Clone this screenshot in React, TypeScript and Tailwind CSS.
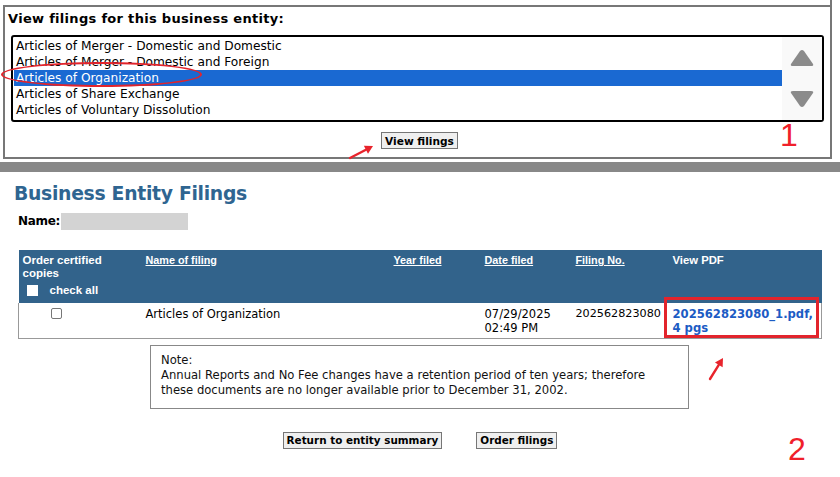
import React from "react";

const body = { fontFamily: '"DejaVu Sans", Verdana, sans-serif' };
const head = { fontFamily: '"Liberation Sans", Arial, sans-serif' };

const filings = [
  "Articles of Merger - Domestic and Domestic",
  "Articles of Merger - Domestic and Foreign",
  "Articles of Organization",
  "Articles of Share Exchange",
  "Articles of Voluntary Dissolution",
];

const RedArrow = ({ className, x1, y1, x2, y2 }: { className: string; x1: number; y1: number; x2: number; y2: number }) => {
  // arrow drawn from tail (x1,y1) to head (x2,y2) with a filled head
  const ang = Math.atan2(y2 - y1, x2 - x1);
  const len = 8;
  const w = 4.5;
  const bx = x2 - Math.cos(ang) * len;
  const by = y2 - Math.sin(ang) * len;
  const px = -Math.sin(ang) * w;
  const py = Math.cos(ang) * w;
  return (
    <svg className={className} viewBox="0 0 30 30" fill="none">
      <path d={`M${x1} ${y1} L${bx} ${by}`} stroke="#e8242c" strokeWidth="2.4" strokeLinecap="round" />
      <path d={`M${x2} ${y2} L${bx + px} ${by + py} L${bx - px} ${by - py} Z`} fill="#e8242c" />
    </svg>
  );
};

export default function App() {
  return (
    <div className="w-[840px] h-[477px] bg-white overflow-hidden text-black" style={body}>
      {/* top panel */}
      <div className="mr-[8px] border-r-2 border-[#777] pt-[5px]">
        <div className="relative ml-[3px] border-t-2 border-l-2 border-b-2 border-[#777] h-[154px] pt-[4px]">
          <div className="pl-[3px] text-[13px] font-bold leading-[16px] tracking-[0.3px]">
            View filings for this business entity:
          </div>
          <div className="mt-[8px] ml-[6px] mr-[6px] h-[87px] border-2 border-black rounded-[3px] flex">
            <div className="flex-1 pt-[1px] pl-[1px]">
              {filings.map((f, i) => (
                <div
                  key={f}
                  className={
                    "h-[16px] leading-[16px] pl-[2px] text-[12.2px] " +
                    (i === 2 ? "bg-[#1a69d2] text-white" : "")
                  }
                >
                  {f}
                </div>
              ))}
            </div>
            <div className="w-[40px] bg-[#f9f9f9] flex flex-col items-center justify-between py-[12px]">
              <svg width="24" height="18" viewBox="0 0 24 18">
                <path d="M10 2 Q12 0 14 2 L23 15 Q24 17 21 17 L3 17 Q0 17 1 15 Z" fill="#8b8b8b" />
              </svg>
              <svg width="24" height="18" viewBox="0 0 24 18">
                <path d="M10 16 Q12 18 14 16 L23 3 Q24 1 21 1 L3 1 Q0 1 1 3 Z" fill="#8b8b8b" />
              </svg>
            </div>
          </div>
          <div className="flex justify-center mt-[10px] pl-[4px]">
            <button className="border border-[#767676] bg-[#efefef] px-[3px] h-[17px] leading-[14px] text-[10.6px] font-bold">
              View filings
            </button>
          </div>
          {/* annotations */}
          <div className="absolute left-[-4px] top-[55px] w-[201px] h-[25px] border-[2.5px] border-[#e2242c] rounded-[50%]" />
          <RedArrow className="absolute left-[340px] top-[136px] w-[30px] h-[30px]" x1={5} y1={15} x2={28} y2={3} />
          <div
            className="absolute left-[775px] top-[112px] text-[32px] leading-[32px] text-[#f0202a]"
            style={head}
          >
            1
          </div>
        </div>
      </div>
      <div className="mt-[3px] h-[10px] bg-[#888]" />

      {/* filings */}
      <div className="relative px-[14px]">
        <h1 className="mt-[10px] text-[18.8px] leading-[24px] font-bold text-[#2f6591] tracking-[-0.3px]">
          Business Entity Filings
        </h1>
        <div className="mt-[6px] ml-[4px] flex items-center gap-[1px]">
          <span className="text-[12px] font-bold tracking-[-0.3px]">Name:</span>
          <span className="w-[127px] h-[17px] bg-[#d3d3d3]" />
        </div>

        <table className="mt-[20px] ml-[4px] w-[804px] border-collapse text-[11.5px]" style={{ tableLayout: "fixed" }}>
          <colgroup>
            <col className="w-[123px]" />
            <col className="w-[248px]" />
            <col className="w-[91px]" />
            <col className="w-[91px]" />
            <col className="w-[97px]" />
            <col />
          </colgroup>
          <thead>
            <tr className="bg-[#32638b] text-white align-top font-bold leading-[13px] text-[10.8px]" style={head}>
              <th className="text-left font-bold px-[4px] pt-[4px] pb-[6px] text-[11.5px]">
                Order certified copies
                <label className="flex items-center mt-[4px] ml-[4px] gap-[12px]">
                  <span className="w-[11px] h-[11px] bg-white inline-block" />
                  check all
                </label>
              </th>
              <th className="text-left font-bold px-[4px] pt-[4px]"><span className="underline">Name of filing</span></th>
              <th className="text-left font-bold px-[4px] pt-[4px]"><span className="underline">Year filed</span></th>
              <th className="text-left font-bold px-[4px] pt-[4px]"><span className="underline">Date filed</span></th>
              <th className="text-left font-bold px-[4px] pt-[4px]"><span className="underline">Filing No.</span></th>
              <th className="text-left font-bold px-[4px] pt-[4px] text-[11.3px]">View PDF</th>
            </tr>
          </thead>
          <tbody>
            <tr className="align-top leading-[14px] border-l border-r border-b border-[#999] h-[35px]">
              <td className="pt-[5px]">
                <span className="block ml-[32px] w-[11px] h-[11px] border border-[#777] rounded-[2px] bg-white" />
              </td>
              <td className="px-[4px] pt-[4px]">Articles of Organization</td>
              <td className="px-[4px] pt-[4px]"></td>
              <td className="px-[4px] pt-[4px]">07/29/2025<br />02:49 PM</td>
              <td className="px-[4px] pt-[4px] text-[11.2px]">202562823080</td>
              <td className="pl-[4px] pr-0 pt-[4px] font-bold text-[#1c5bc4] text-[11.6px] whitespace-nowrap">202562823080_1.pdf,<br />4 pgs</td>
            </tr>
          </tbody>
        </table>

        <div className="mt-[6px] ml-[136px] w-[539px] h-[64px] border border-[#888] px-[10px] pt-[7px] text-[11.6px] leading-[15px] text-[#111]">
          Note:
          <br />
          Annual Reports and No Fee changes have a retention period of ten years; therefore
          <br />
          these documents are no longer available prior to December 31, 2002.
        </div>

        <div className="mt-[23px] flex justify-center gap-[34px]">
          <button className="border border-[#767676] bg-[#efefef] px-[3px] h-[17px] leading-[14px] text-[10.4px] font-bold">
            Return to entity summary
          </button>
          <button className="border border-[#767676] bg-[#efefef] px-[3px] h-[17px] leading-[14px] text-[10.4px] font-bold">
            Order filings
          </button>
        </div>

        {/* annotations */}
        <div className="absolute left-[664px] top-[115px] w-[155px] h-[41px] border-[3px] border-[#e2242c]" />
        <RedArrow className="absolute left-[703px] top-[170px] w-[30px] h-[30px]" x1={7} y1={27} x2={20} y2={6} />
        <div className="absolute left-[788px] top-[251px] text-[32px] leading-[32px] text-[#f0202a]" style={head}>
          2
        </div>
      </div>
    </div>
  );
}
